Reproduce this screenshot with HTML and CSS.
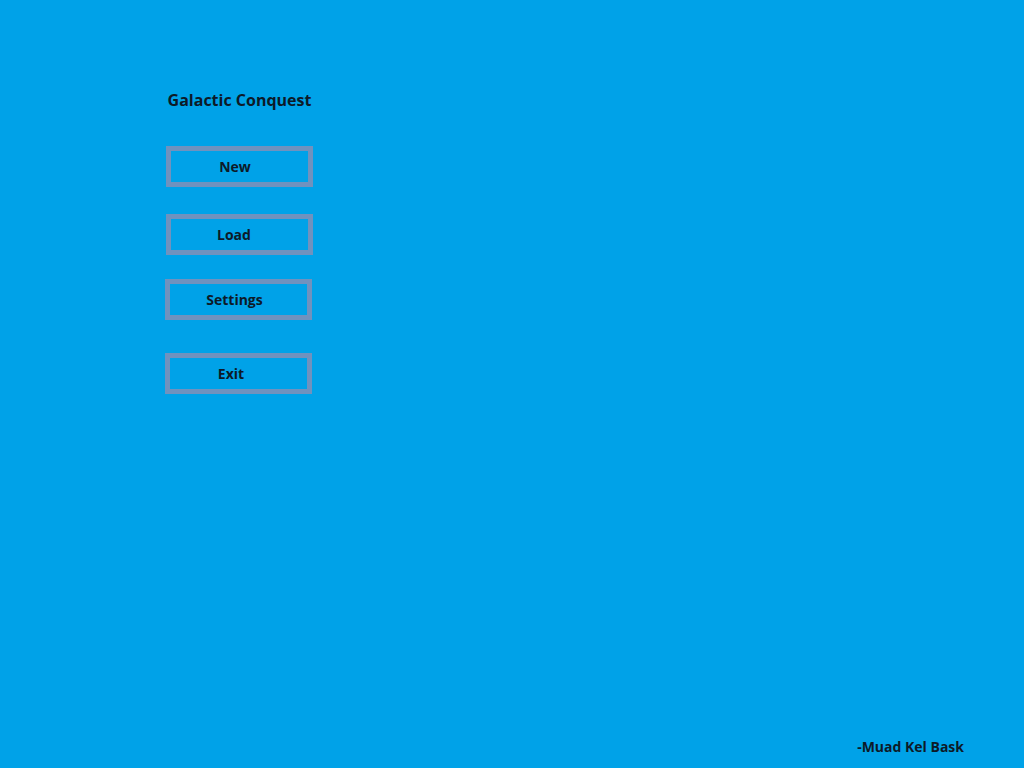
FILE: index.html
```html
<!DOCTYPE html>
<html>
<head>
<meta charset="utf-8">
<link rel="stylesheet" href="styles.css">
</head>
<body>
<div class="screen">
  <div class="menu">
    <h1 class="title">Galactic Conquest</h1>
    <div class="btn btn-new">New</div>
    <div class="btn btn-load">Load</div>
    <div class="btn btn-settings">Settings</div>
    <div class="btn btn-exit">Exit</div>
  </div>
  <div class="footer">-Muad Kel Bask</div>
</div>
</body>
</html>
```
FILE: styles.css
```css
html, body {
  margin: 0;
  padding: 0;
}
body {
  background: #00a2e8;
  font-family: "Open Sans", "Liberation Sans", sans-serif;
  color: #0d1a28;
}
.screen {
  width: 1024px;
  height: 768px;
  display: flex;
  flex-direction: column;
  justify-content: space-between;
}
.menu {
  display: flex;
  flex-direction: column;
  align-items: flex-start;
  padding-left: 165px;
  padding-top: 87px;
}
.title {
  margin: 0;
  width: 149px;
  text-align: center;
  font-size: 16px;
  font-weight: 700;
  line-height: 26px;
  letter-spacing: 0;
}
.btn {
  box-sizing: border-box;
  width: 147px;
  height: 41px;
  border: 5px solid #7092be;
  display: flex;
  align-items: center;
  justify-content: center;
  font-size: 14px;
  font-weight: 700;
  padding-bottom: 1px;
}
.btn-new { margin-top: 33px; margin-left: 1px; padding-right: 9px; }
.btn-load { margin-top: 27px; margin-left: 1px; padding-right: 11px; }
.btn-settings { margin-top: 24px; padding-right: 8px; }
.btn-exit { margin-top: 33px; padding-right: 15px; }
.footer {
  align-self: flex-end;
  margin-right: 60px;
  margin-bottom: 12px;
  font-size: 14px;
  font-weight: 700;
}
```
